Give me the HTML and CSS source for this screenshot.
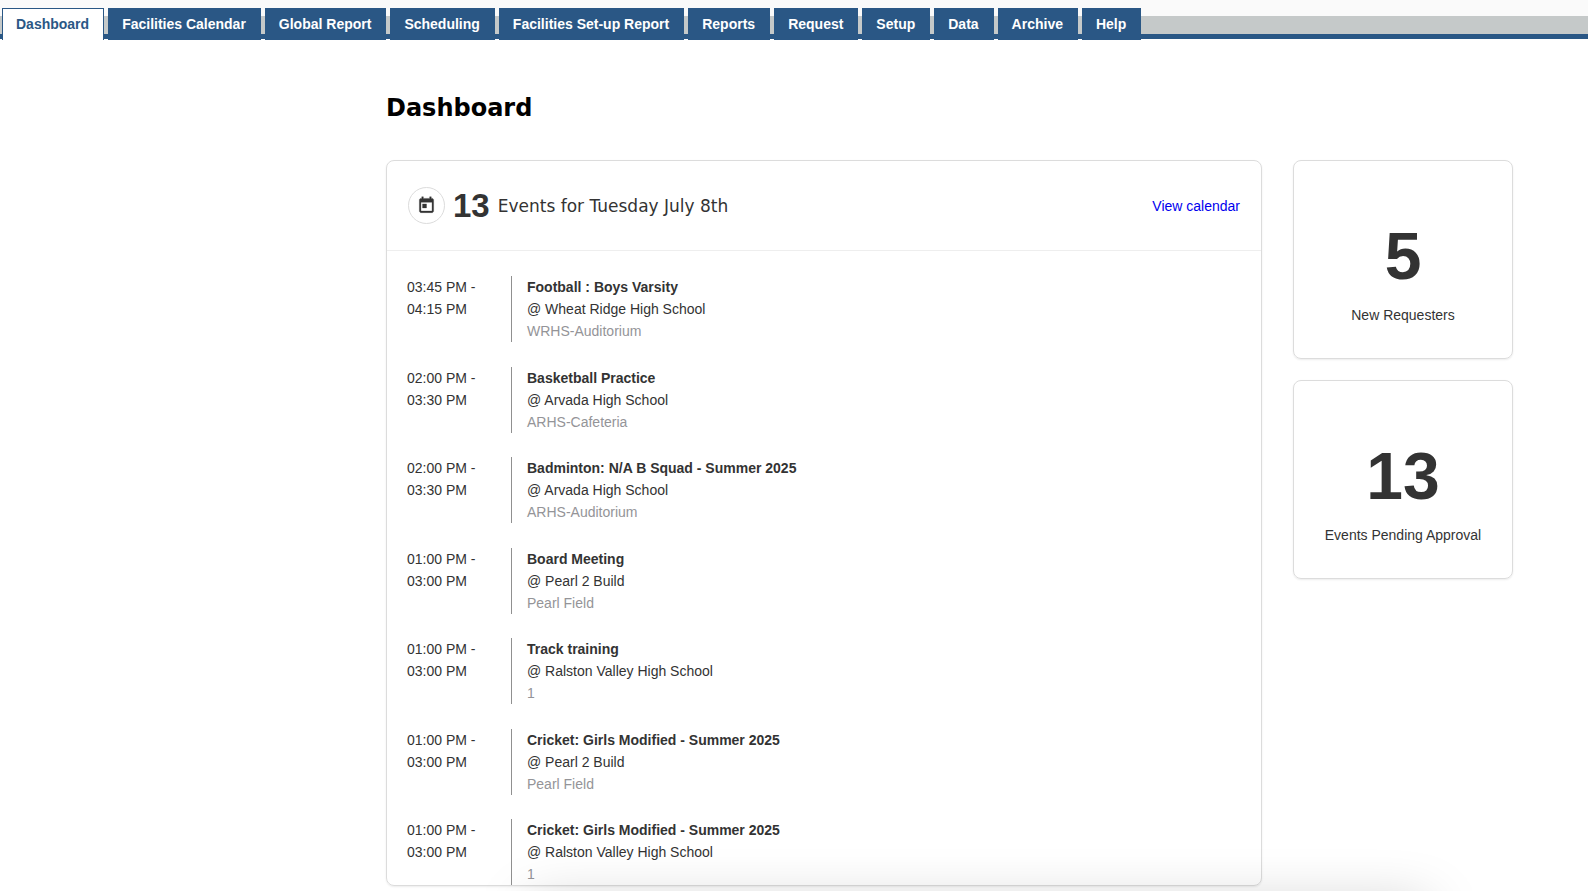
FILE: index.html
```html
<!DOCTYPE html>
<html lang="en">
<head>
<meta charset="utf-8">
<title>Dashboard</title>
<link rel="stylesheet" href="styles.css">
</head>
<body>
<nav class="tabs" aria-label="Main">
  <a class="tab tab-active" href="#" aria-current="page">Dashboard</a>
  <a class="tab" href="#">Facilities Calendar</a>
  <a class="tab" href="#">Global Report</a>
  <a class="tab" href="#">Scheduling</a>
  <a class="tab" href="#">Facilities Set-up Report</a>
  <a class="tab" href="#">Reports</a>
  <a class="tab" href="#">Request</a>
  <a class="tab" href="#">Setup</a>
  <a class="tab" href="#">Data</a>
  <a class="tab" href="#">Archive</a>
  <a class="tab" href="#">Help</a>
</nav>
<main class="page">
  <h1 class="title">Dashboard</h1>
  <div class="columns">
    <section class="card events">
      <header class="events-head">
        <span class="badge">
          <svg class="badge-icon" viewBox="0 0 24 24" aria-hidden="true"><path fill="currentColor" stroke="currentColor" stroke-width=".4" d="M19 3h-1V1h-2v2H8V1H6v2H5c-1.100 0-2 .9-2 2v14c0 1.100.9 2 2 2h14c1.100 0 2-.9 2-2V5c0-1.100-.9-2-2-2zm0 16H5V8h14v11zM7 10h5v5H7z"/></svg>
        </span>
        <strong class="count">13</strong>
        <h2 class="subtitle">Events for Tuesday July 8th</h2>
        <a class="view-link" href="#">View calendar</a>
      </header>
      <ul class="event-list">
        <li class="event"><div class="time">03:45 PM -<br>04:15 PM</div><div class="info"><strong>Football : Boys Varsity</strong><span>@ Wheat Ridge High School</span><span class="room">WRHS-Auditorium</span></div></li>
        <li class="event"><div class="time">02:00 PM -<br>03:30 PM</div><div class="info"><strong>Basketball Practice</strong><span>@ Arvada High School</span><span class="room">ARHS-Cafeteria</span></div></li>
        <li class="event"><div class="time">02:00 PM -<br>03:30 PM</div><div class="info"><strong>Badminton: N/A B Squad - Summer 2025</strong><span>@ Arvada High School</span><span class="room">ARHS-Auditorium</span></div></li>
        <li class="event"><div class="time">01:00 PM -<br>03:00 PM</div><div class="info"><strong>Board Meeting</strong><span>@ Pearl 2 Build</span><span class="room">Pearl Field</span></div></li>
        <li class="event"><div class="time">01:00 PM -<br>03:00 PM</div><div class="info"><strong>Track training</strong><span>@ Ralston Valley High School</span><span class="room">1</span></div></li>
        <li class="event"><div class="time">01:00 PM -<br>03:00 PM</div><div class="info"><strong>Cricket: Girls Modified - Summer 2025</strong><span>@ Pearl 2 Build</span><span class="room">Pearl Field</span></div></li>
        <li class="event"><div class="time">01:00 PM -<br>03:00 PM</div><div class="info"><strong>Cricket: Girls Modified - Summer 2025</strong><span>@ Ralston Valley High School</span><span class="room">1</span></div></li>
      </ul>
    </section>
    <aside class="stats">
      <section class="card stat"><strong class="stat-number">5</strong><span>New Requesters</span></section>
      <section class="card stat"><strong class="stat-number">13</strong><span>Events Pending Approval</span></section>
    </aside>
  </div>
</main>
<div class="bottom-glow"></div>
</body>
</html>
```
FILE: styles.css
```css
* { box-sizing: border-box; }

body {
  margin: 0;
  min-height: 100vh;
  display: flex;
  flex-direction: column;
  background: #fff;
  color: #333;
  font: 14px/22px "Liberation Sans", Arial, sans-serif;
}

/* Tab bar */
.tabs {
  display: flex;
  gap: 4px;
  padding: 8px 2px 0;
  background: linear-gradient(#fafafa 16px, #c5c9c9 16px 34px, #2a5785 34px 39px, #fff 39px);
}

.tab {
  padding: 0 14px 0 13px;
  border: 1px solid #2a5785;
  border-bottom: 0;
  background: #2a5785;
  color: #fff;
  font-weight: bold;
  line-height: 31px;
  text-decoration: none;
  white-space: nowrap;
}

.tab-active {
  background: #fff;
  color: #2a5785;
}

/* Page */
.page {
  flex: 1;
  display: flex;
  flex-direction: column;
  padding: 53px 75px 5px 386px;
}

.title {
  margin: 0 0 37px;
  color: #000;
  font: bold 24px/30px "DejaVu Sans", Verdana, sans-serif;
}

.columns {
  flex: 1;
  display: flex;
  gap: 31px;
}

.card {
  border: 1px solid #dcdcdc;
  border-radius: 8px;
  box-shadow: 0 1px 2px rgba(0, 0, 0, 0.08);
}

/* Events */
.events {
  flex: 1;
  display: flex;
  flex-direction: column;
}

.events-head {
  display: flex;
  align-items: center;
  height: 90px;
  padding: 0 21px;
  border-bottom: 1px solid #eee;
}

.badge {
  display: flex;
  align-items: center;
  justify-content: center;
  width: 37px;
  height: 37px;
  border: 1px solid #dcdcdc;
  border-radius: 50%;
}

.badge-icon {
  width: 19px;
  height: 19px;
}

.count {
  margin: 0 8px;
  font-size: 33px;
}

.subtitle {
  flex: 1;
  margin: 0;
  font: 17px/22px "DejaVu Sans", Verdana, sans-serif;
}

.view-link {
  color: #00e;
  text-decoration: none;
}

.event-list {
  flex: 1;
  display: flex;
  flex-direction: column;
  justify-content: space-between;
  gap: 24px;
  margin: 0;
  padding: 25px 20px 0;
  list-style: none;
}

.event { display: flex; }

.time { width: 104px; }

.info {
  flex: 1;
  display: flex;
  flex-direction: column;
  padding-left: 15px;
  border-left: 1px solid #909090;
}

.room { color: #949498; }

/* Statistics */
.stats {
  display: flex;
  flex-direction: column;
  gap: 21px;
  width: 220px;
}

.stat {
  display: flex;
  flex-direction: column;
  align-items: center;
  padding: 59px 12px 32px;
}

.stat-number {
  margin-bottom: 12px;
  font-size: 66px;
  line-height: 72px;
}

/* Soft shade rising from the lower edge of the window */
.bottom-glow {
  position: fixed;
  right: 160px;
  bottom: -45px;
  left: 530px;
  height: 30px;
  box-shadow: 0 0 54px rgba(0, 0, 0, 0.25);
  pointer-events: none;
}
```
